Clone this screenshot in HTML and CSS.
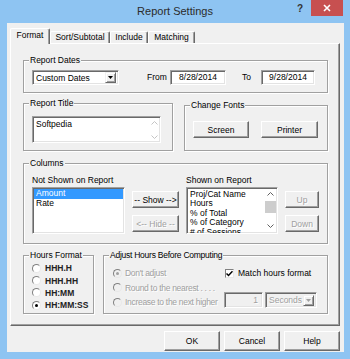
FILE: index.html
```html
<!DOCTYPE html>
<html lang="en">
<head>
    <meta charset="UTF-8">
    <title>Report Settings</title>
    <link rel="stylesheet" href="styles.css">
</head>
<body>
    <div class="window">
        <!-- Title bar -->
        <div class="titlebar">
            <span class="title">Report Settings</span>
            <div class="controls">
                <span class="help">?</span>
                <span class="close">
                    <svg width="8" height="8" viewBox="0 0 8 8"><path d="M1 1L7 7M7 1L1 7" stroke="#fff" stroke-width="1.6"/></svg>
                </span>
            </div>
        </div>

        <div class="client">
            <!-- Tabs -->
            <div class="tabs">
                <div class="tab active tab-format">Format</div>
                <div class="tab tab-sort">Sort/Subtotal</div>
                <div class="tab tab-include">Include</div>
                <div class="tab tab-matching">Matching</div>
            </div>

            <div class="panel">
                <!-- Report Dates -->
                <div class="group dates">
                    <span class="group-label">Report Dates</span>
                    <div class="combo combo-dates">
                        <span class="combo-text">Custom Dates</span>
                        <span class="drop"><svg width="5" height="3" viewBox="0 0 5 3"><path d="M0 0H5L2.5 3Z" fill="#000"/></svg></span>
                    </div>
                    <span class="lbl lbl-from">From</span>
                    <div class="field date-from">8/28/2014</div>
                    <span class="lbl lbl-to">To</span>
                    <div class="field date-to">9/28/2014</div>
                </div>

                <div class="row row-title">
                    <!-- Report Title -->
                    <div class="group title-group">
                        <span class="group-label">Report Title</span>
                        <div class="field memo">
                            <span class="memo-text">Softpedia</span>
                            <span class="memo-scroll">
                                <svg width="7" height="4" viewBox="0 0 7 4"><path d="M0.5 3.5L3.5 0.5L6.5 3.5" fill="none" stroke="#c4c4c4"/></svg>
                                <svg width="7" height="4" viewBox="0 0 7 4"><path d="M0.5 0.5L3.5 3.5L6.5 0.5" fill="none" stroke="#c4c4c4"/></svg>
                            </span>
                        </div>
                    </div>

                    <!-- Change Fonts -->
                    <div class="group fonts">
                        <span class="group-label">Change Fonts</span>
                        <div class="btn btn-screen">Screen</div>
                        <div class="btn btn-printer">Printer</div>
                    </div>
                </div>

                <!-- Columns -->
                <div class="group columns">
                    <span class="group-label">Columns</span>
                    <div class="col col-hidden">
                        <div class="col-label">Not Shown on Report</div>
                        <div class="field list list-hidden">
                            <div class="item selected">Amount</div>
                            <div class="item">Rate</div>
                        </div>
                    </div>
                    <div class="col col-move">
                        <div class="btn btn-small">-- Show --&gt;</div>
                        <div class="btn btn-small disabled">&lt;-- Hide --</div>
                    </div>
                    <div class="col col-shown">
                        <div class="col-label">Shown on Report</div>
                        <div class="field list list-shown">
                            <div class="list-items">
                                <div class="item">Proj/Cat Name</div>
                                <div class="item">Hours</div>
                                <div class="item">% of Total</div>
                                <div class="item">% of Category</div>
                                <div class="item"># of Sessions</div>
                            </div>
                            <div class="vscroll">
                                <svg width="7" height="4" viewBox="0 0 7 4"><path d="M0.5 3.5L3.5 0.5L6.5 3.5" fill="none" stroke="#606060"/></svg>
                                <span class="thumb"></span>
                                <svg width="7" height="4" viewBox="0 0 7 4"><path d="M0.5 0.5L3.5 3.5L6.5 0.5" fill="none" stroke="#606060"/></svg>
                            </div>
                        </div>
                    </div>
                    <div class="col col-order">
                        <div class="btn btn-small disabled">Up</div>
                        <div class="btn btn-small disabled">Down</div>
                    </div>
                </div>

                <div class="row row-hours">
                    <!-- Hours Format -->
                    <div class="group hours">
                        <span class="group-label">Hours Format</span>
                        <div class="radio-row"><span class="radio"></span><span class="fmt">HHH.H</span></div>
                        <div class="radio-row"><span class="radio"></span><span class="fmt">HHH.HH</span></div>
                        <div class="radio-row"><span class="radio"></span><span class="fmt">HH:MM</span></div>
                        <div class="radio-row"><span class="radio checked"></span><span class="fmt">HH:MM:SS</span></div>
                    </div>

                    <!-- Adjust Hours -->
                    <div class="group adjust">
                        <span class="group-label">Adjust Hours Before Computing</span>
                        <div class="adjust-options">
                            <div class="radio-row tall disabled"><span class="radio checked"></span><span>Don't adjust</span></div>
                            <div class="radio-row tall disabled"><span class="radio"></span><span>Round to the nearest . . . .</span></div>
                            <div class="radio-row tall disabled"><span class="radio"></span><span>Increase to the next higher</span></div>
                        </div>
                        <div class="adjust-right">
                            <div class="check-row">
                                <span class="checkbox">
                                    <svg width="7" height="7" viewBox="0 0 7 7"><path d="M0.5 3.5L2.5 5.5L6.5 1.2" fill="none" stroke="#000" stroke-width="1.5"/></svg>
                                </span>
                                <span>Match hours format</span>
                            </div>
                            <div class="unit-row">
                                <div class="field num disabled">1</div>
                                <div class="combo combo-unit disabled">
                                    <span class="combo-text">Seconds</span>
                                    <span class="drop"><svg width="5" height="3" viewBox="0 0 5 3"><path d="M0 0H5L2.5 3Z" fill="#a0a0a0"/></svg></span>
                                </div>
                            </div>
                        </div>
                    </div>
                </div>
            </div>

            <!-- Dialog buttons -->
            <div class="buttons">
                <div class="btn btn-dialog">OK</div>
                <div class="btn btn-dialog">Cancel</div>
                <div class="btn btn-dialog">Help</div>
            </div>
        </div>
    </div>
</body>
</html>
```

FILE: styles.css
```css
/* General styling */
body {
    margin: 0;
    font-family: "Liberation Sans", Arial, sans-serif;
    font-size: 8.5px;
    color: #000;
}

.window {
    width: 350px;
    height: 359px;
    background: #8ec4f2;
    display: flex;
    flex-direction: column;
}

/* Title bar */
.titlebar {
    height: 23px;
    display: grid;
    grid-template-columns: 1fr auto 1fr;
    align-items: start;
}

.title {
    grid-column: 2;
    font-size: 11px;
    line-height: 23px;
    color: #2b2b2b;
}

.controls {
    grid-column: 3;
    justify-self: end;
    display: flex;
    padding-right: 7px;
}

.help {
    font-weight: bold;
    font-size: 10px;
    color: #333;
    margin: 3px 8px 0 0;
}

.close {
    width: 32px;
    height: 16px;
    background: #c75050;
    display: flex;
    align-items: center;
    justify-content: center;
}

/* Client area */
.client {
    flex: 1;
    margin: 0 6px 7px 7px;
    background: #f0f0f0;
    padding: 5px 0 0 3px;
}

.tabs {
    display: flex;
    align-items: flex-end;
    height: 15px;
    position: relative;
    z-index: 1;
}

.tab {
    box-sizing: border-box;
    height: 12px;
    border-top: 1px solid #fff;
    border-left: 1px solid #fff;
    border-right: 1px solid #696969;
    box-shadow: inset -1px 0 0 #a0a0a0;
    border-radius: 2px 2px 0 0;
    text-align: center;
    line-height: 11px;
}

.tab.active {
    height: 16px;
    margin-bottom: -1px;
    background: #f0f0f0;
    line-height: 13px;
}

.tab-format { width: 40px; }
.tab-sort { width: 60px; }
.tab-include { width: 38px; }
.tab-matching { width: 47px; }

.panel {
    box-sizing: border-box;
    width: 330px;
    height: 283px;
    border-top: 1px solid #fff;
    border-left: 1px solid #fff;
    border-right: 1px solid #696969;
    border-bottom: 1px solid #696969;
    box-shadow: inset -1px -1px 0 #a0a0a0;
    padding: 16px 11px 0 12px;
}

/* Group boxes */
.group {
    position: relative;
    box-sizing: border-box;
    border: 1px solid #a0a0a0;
    box-shadow: inset 1px 1px 0 #fff, 1px 1px 0 #fff;
}

.group-label {
    position: absolute;
    top: -6px;
    left: 5px;
    padding: 0 1px;
    line-height: 11px;
    background: #f0f0f0;
    white-space: nowrap;
}

.adjust .group-label {
    letter-spacing: -0.25px;
}

.row {
    display: flex;
    align-items: flex-end;
}

/* Sunken fields */
.field {
    box-sizing: border-box;
    background: #fff;
    border: 1px solid;
    border-color: #a0a0a0 #fff #fff #a0a0a0;
    box-shadow: inset 1px 1px 0 #696969, inset -1px -1px 0 #e3e3e3;
}

.combo {
    box-sizing: border-box;
    height: 15px;
    background: #fff;
    border: 1px solid;
    border-color: #a0a0a0 #fff #fff #a0a0a0;
    box-shadow: inset 1px 1px 0 #696969, inset -1px -1px 0 #e3e3e3;
    display: flex;
    align-items: center;
    justify-content: space-between;
    padding: 1px 2px 1px 2px;
}

.combo-text {
    padding-left: 1px;
    white-space: nowrap;
}

.drop {
    box-sizing: border-box;
    width: 11px;
    height: 11px;
    background: #f0f0f0;
    border: 1px solid;
    border-color: #f0f0f0 #696969 #696969 #f0f0f0;
    box-shadow: inset 1px 1px 0 #fff, inset -1px -1px 0 #a0a0a0;
    display: flex;
    align-items: center;
    justify-content: center;
}

/* Raised buttons */
.btn {
    box-sizing: border-box;
    background: #f0f0f0;
    border: 1px solid;
    border-color: #fff #696969 #696969 #fff;
    box-shadow: inset -1px -1px 0 #a0a0a0;
    display: flex;
    align-items: center;
    justify-content: center;
    white-space: nowrap;
}

.btn.disabled,
.disabled {
    color: #a0a0a0;
    text-shadow: 1px 1px 0 #fff;
}

/* Report Dates */
.dates {
    height: 33px;
    display: flex;
    align-items: flex-start;
    padding: 9px 0 0 8px;
}

.combo-dates { width: 87px; }

.lbl {
    line-height: 15px;
}

.lbl-from {
    width: 23px;
    margin-left: 28px;
}

.lbl-to {
    width: 19px;
    margin-left: 16px;
}

.date-from,
.date-to {
    height: 15px;
    line-height: 13px;
    text-align: center;
}

.date-from { width: 56px; }
.date-to { width: 54px; }

/* Report Title / Change Fonts */
.row-title {
    margin-top: 10px;
    gap: 11px;
}

.title-group {
    width: 150px;
    height: 48px;
    padding: 12px 0 0 8px;
}

.memo {
    width: 129px;
    height: 27px;
    display: flex;
    justify-content: space-between;
}

.memo-text {
    padding: 2px 3px;
}

.memo-scroll {
    width: 12px;
    display: flex;
    flex-direction: column;
    justify-content: space-between;
    align-items: center;
    padding: 4px 0 3px;
}

.fonts {
    width: 144px;
    height: 46px;
    display: flex;
    gap: 12px;
    padding: 15px 0 0 8px;
}

.btn-screen { width: 56px; height: 17px; }
.btn-printer { width: 57px; height: 17px; }

/* Columns */
.columns {
    margin-top: 12px;
    height: 81px;
    display: flex;
    padding: 11px 0 0 8px;
}

.col-label {
    line-height: 11px;
    margin-bottom: 1px;
    white-space: nowrap;
}

.list {
    height: 47px;
    line-height: 9.6px;
    padding: 1px;
    overflow: hidden;
}

.item {
    padding-left: 2px;
    white-space: nowrap;
}

.item.selected {
    background: #3399ff;
    color: #fff;
}

.col-hidden { width: 93px; }

.col-move,
.col-order {
    display: flex;
    flex-direction: column;
    gap: 7px;
    padding-top: 16px;
    margin-left: 7px;
}

.col-move { width: 47px; }
.col-order { width: 34px; }

.btn-small { height: 17px; }

.col-shown {
    width: 92px;
    margin-left: 7px;
}

.list-shown {
    display: flex;
    padding-bottom: 0;
}

.list-items {
    flex: 1;
    padding-top: 0.5px;
}

.vscroll {
    width: 11px;
    display: flex;
    flex-direction: column;
    align-items: center;
    padding-top: 3px;
}

.thumb {
    width: 11px;
    height: 12px;
    margin: 5px 0 11px;
    background: #cdcdcd;
}

/* Hours */
.row-hours {
    margin-top: 11px;
    gap: 9px;
}

.hours {
    width: 71px;
    height: 59px;
    padding: 6px 0 0 8px;
}

.radio-row {
    display: flex;
    align-items: center;
    gap: 4px;
    height: 12.4px;
    white-space: nowrap;
}

.radio-row.tall {
    height: 14.5px;
    gap: 3px;
    letter-spacing: -0.3px;
}

.radio {
    box-sizing: border-box;
    width: 9px;
    height: 9px;
    border-radius: 50%;
    background: #fff;
    border: 1px solid;
    border-color: #808080 #e8e8e8 #e8e8e8 #808080;
    display: flex;
    align-items: center;
    justify-content: center;
}

.radio.checked::after {
    content: "";
    width: 3px;
    height: 3px;
    border-radius: 50%;
    background: #000;
}

.disabled .radio {
    background: #f0f0f0;
}

.disabled .radio.checked::after {
    background: #a0a0a0;
}

.fmt {
    font-weight: bold;
    color: #222;
}

.adjust {
    width: 225px;
    height: 59px;
    display: flex;
    padding: 10px 0 0 9px;
}

.adjust-options {
    width: 111px;
}

.check-row {
    display: flex;
    align-items: center;
    gap: 4px;
    height: 14px;
    padding-left: 1px;
    white-space: nowrap;
}

.checkbox {
    box-sizing: border-box;
    width: 9px;
    height: 9px;
    background: #fff;
    border: 1px solid;
    border-color: #808080 #e8e8e8 #e8e8e8 #808080;
    display: flex;
    align-items: center;
    justify-content: center;
}

.unit-row {
    display: flex;
    gap: 2px;
    margin-top: 12px;
}

.num {
    width: 39px;
    height: 16px;
    background: #f0f0f0;
    text-align: right;
    padding-right: 4px;
    line-height: 14px;
}

.combo-unit {
    width: 52px;
    height: 16px;
    background: #f0f0f0;
}

/* Dialog buttons */
.buttons {
    display: flex;
    justify-content: flex-end;
    gap: 4px;
    margin-top: 5px;
    padding-right: 4px;
}

.btn-dialog {
    width: 56px;
    height: 20px;
}
```
